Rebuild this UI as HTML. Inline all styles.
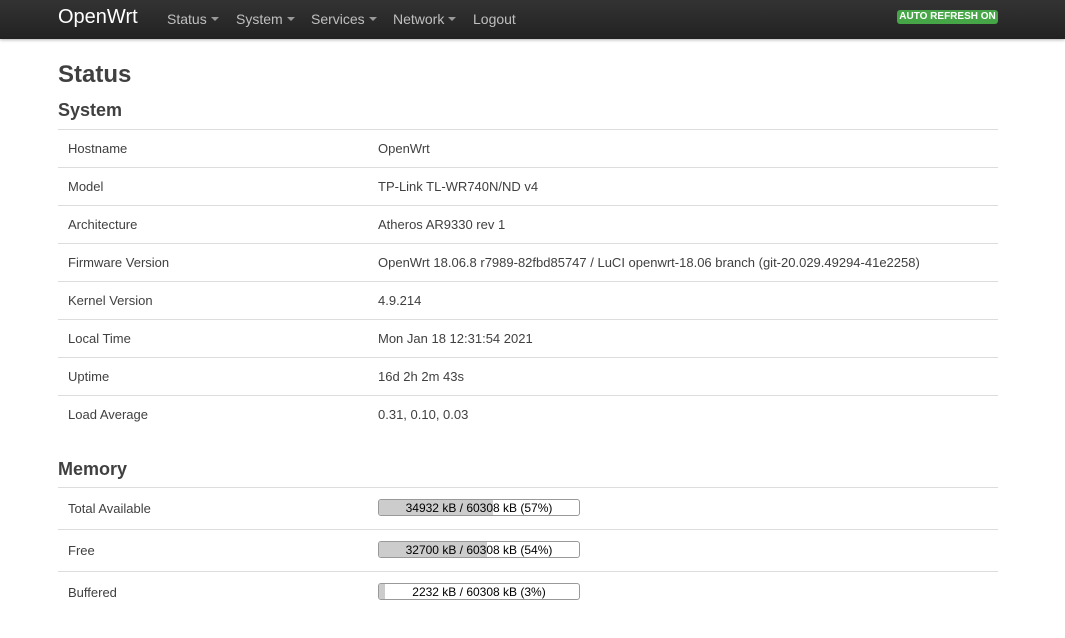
<!DOCTYPE html>
<html><head><meta charset="utf-8"><style>
*{box-sizing:border-box;margin:0;padding:0}
body{width:1065px;height:638px;overflow:hidden;background:#fff;font-family:"Liberation Sans",Arial,sans-serif;color:#404040;font-size:13px}
.nav{position:absolute;left:0;top:0;width:1065px;height:39px;background:linear-gradient(#333,#222);box-shadow:0 1px 3px rgba(0,0,0,.3)}
.brand{position:absolute;left:58px;top:6px;color:#fff;font-size:20px}
.menu{position:absolute;top:11px;color:#bfbfbf;font-size:14px}
.caret{display:inline-block;width:0;height:0;border-left:4px solid transparent;border-right:4px solid transparent;border-top:4px solid #999;vertical-align:middle;margin-left:4px;margin-top:-2px}
.badge{position:absolute;left:897px;top:10px;width:101px;height:14px;background:#46a546;border-radius:3px;color:#fff;font-size:10px;font-weight:bold;text-align:center;line-height:14px}
h1{position:absolute;left:58px;top:61px;font-size:24px;font-weight:bold;color:#404040}
h2{position:absolute;left:58px;font-size:18px;font-weight:bold;color:#404040}
.row{position:absolute;left:58px;width:940px;border-top:1px solid #ddd}
.row span{position:absolute;left:10px}
.row b{position:absolute;left:320px;font-weight:normal}
.bar{position:absolute;left:320px;width:202px;height:17px;border:1px solid #999;border-radius:3px;background:#fff;overflow:hidden;font-size:12px;text-align:center;line-height:16px;color:#000}
.bar i{position:absolute;left:0;top:0;bottom:0;background:#ccc}
.bar em{position:relative;font-style:normal}
</style></head><body>
<div class="nav">
<div class="brand">OpenWrt</div>
<div class="menu" style="left:167px">Status<span class="caret"></span></div>
<div class="menu" style="left:236px">System<span class="caret"></span></div>
<div class="menu" style="left:311px">Services<span class="caret"></span></div>
<div class="menu" style="left:393px">Network<span class="caret"></span></div>
<div class="menu" style="left:473px">Logout</div>
<div class="badge">AUTO REFRESH ON</div>
</div>
<h1>Status</h1>
<h2 style="top:100px">System</h2>
<div class="row" style="top:129px;height:38px"><span style="top:11px">Hostname</span><b style="top:11px">OpenWrt</b></div>
<div class="row" style="top:167px;height:38px"><span style="top:11px">Model</span><b style="top:11px">TP-Link TL-WR740N/ND v4</b></div>
<div class="row" style="top:205px;height:38px"><span style="top:11px">Architecture</span><b style="top:11px">Atheros AR9330 rev 1</b></div>
<div class="row" style="top:243px;height:38px"><span style="top:11px">Firmware Version</span><b style="top:11px">OpenWrt 18.06.8 r7989-82fbd85747 / LuCI openwrt-18.06 branch (git-20.029.49294-41e2258)</b></div>
<div class="row" style="top:281px;height:38px"><span style="top:11px">Kernel Version</span><b style="top:11px">4.9.214</b></div>
<div class="row" style="top:319px;height:38px"><span style="top:11px">Local Time</span><b style="top:11px">Mon Jan 18 12:31:54 2021</b></div>
<div class="row" style="top:357px;height:38px"><span style="top:11px">Uptime</span><b style="top:11px">16d 2h 2m 43s</b></div>
<div class="row" style="top:395px;height:38px"><span style="top:11px">Load Average</span><b style="top:11px">0.31, 0.10, 0.03</b></div>
<h2 style="top:459px">Memory</h2>
<div class="row" style="top:487px;height:42px"><span style="top:13px">Total Available</span><div class="bar" style="top:11px"><i style="width:57%"></i><em>34932 kB / 60308 kB (57%)</em></div></div>
<div class="row" style="top:529px;height:42px"><span style="top:13px">Free</span><div class="bar" style="top:11px"><i style="width:54%"></i><em>32700 kB / 60308 kB (54%)</em></div></div>
<div class="row" style="top:571px;height:42px"><span style="top:13px">Buffered</span><div class="bar" style="top:11px"><i style="width:3%"></i><em>2232 kB / 60308 kB (3%)</em></div></div>
</body></html>
